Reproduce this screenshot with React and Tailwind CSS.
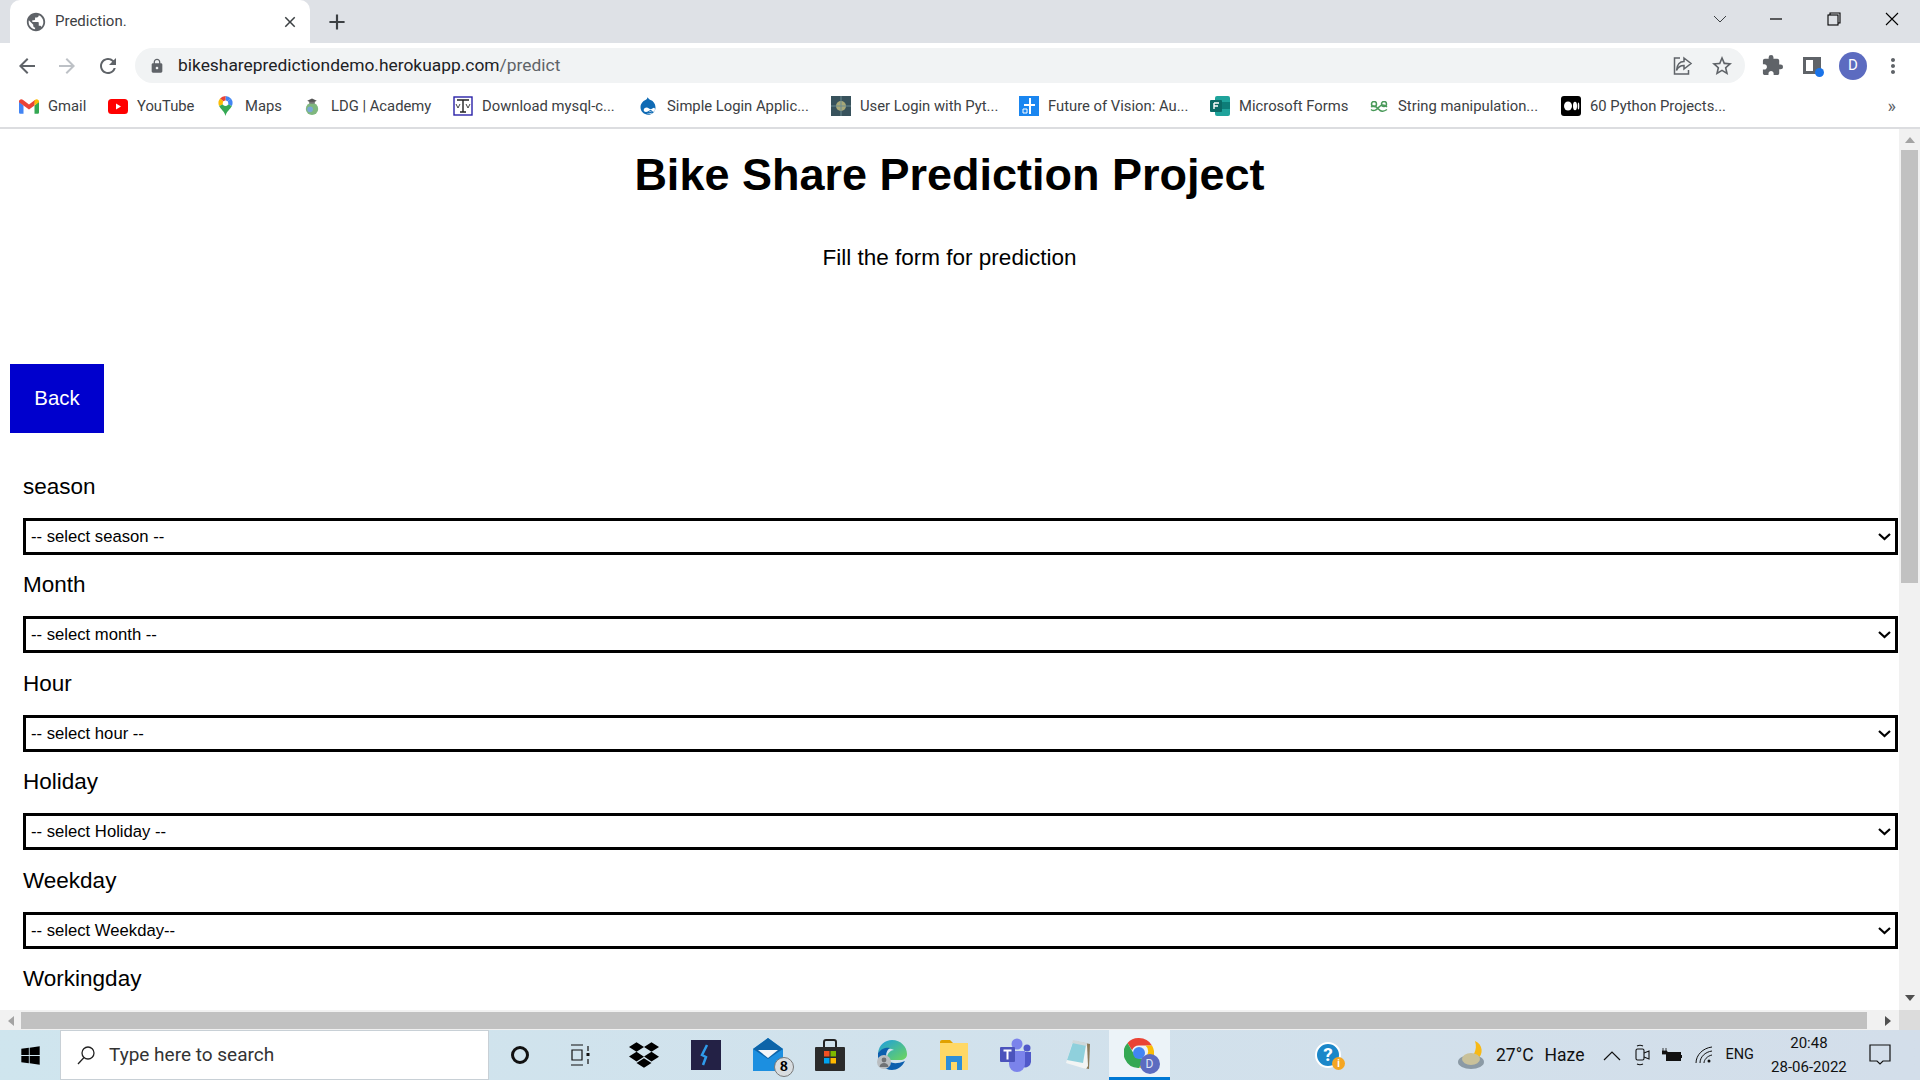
import { FaDropbox, FaWindows, FaDrupal } from "react-icons/fa";
import { MdPublic, MdArrowBack, MdArrowForward, MdRefresh, MdLock, MdExtension, MdStarBorder, MdMoreVert, MdClose, MdAdd } from "react-icons/md";

const Gmail = () => (
  <svg width="20" height="15" viewBox="0 0 20 15">
    <path d="M0 2.500V13.500a1.200 1.200 0 0 0 1.200 1.200H4.500V6.500z" fill="#4285f4" />
    <path d="M20 2.500V13.500a1.200 1.200 0 0 1-1.200 1.200H15.500V6.500z" fill="#34a853" />
    <path d="M0 2.500C0 .5 2.200-.5 3.800.7L10 5.400 16.200.7 15.500 6.500 10 10.600 4.500 6.500 0 3.200z" fill="#ea4335" />
    <path d="M15.500 1.200l.7-.5C17.800-.5 20 .5 20 2.500v.7l-4.500 3.300z" fill="#fbbc04" />
  </svg>
);

const YouTube = () => (
  <svg width="20" height="15" viewBox="0 0 20 15">
    <rect width="20" height="15" rx="3.500" fill="#f00" />
    <path d="M8 4.500l5 3-5 3z" fill="#fff" />
  </svg>
);

const Maps = () => (
  <svg width="15" height="20" viewBox="0 0 16 22">
    <path d="M8 0a8 8 0 0 1 6 2.800L8 8z" fill="#4285f4" />
    <path d="M14 2.800A8 8 0 0 1 15 11L8 8z" fill="#4285f4" />
    <path d="M2 2.800A8 8 0 0 1 8 0v8z" fill="#ea4335" />
    <path d="M1 11a8 8 0 0 1 1-8.200L8 8z" fill="#fbbc04" />
    <path d="M1 11l7-3 7 3c-2 4-6 6-7 11-1-5-5-7-7-11z" fill="#34a853" />
    <circle cx="8" cy="8" r="3" fill="#fff" />
  </svg>
);

const Ldg = () => (
  <svg width="16" height="19" viewBox="0 0 16 20">
    <circle cx="8" cy="12.500" r="6.500" fill="#7fb77e" />
    <circle cx="6" cy="13" r="3" fill="#7aa7d6" />
    <path d="M3 4l5-2.500L13 4 8 6.500z" fill="#555" />
    <path d="M5 5v2h6V5" fill="#777" />
  </svg>
);

const Mysql = () => (
  <svg width="20" height="20" viewBox="0 0 20 20" fill="none">
    <rect x="1" y="1" width="18" height="18" fill="#fff" stroke="#2a22a8" strokeWidth="1.400" />
    <path d="M4 4h12M10 4v12M7 16h6" stroke="#222" strokeWidth="1.400" />
    <path d="M3 8l2 4 2-4M13 8l2 4 2-4" stroke="#444" />
  </svg>
);

const UserLogin = () => (
  <svg width="20" height="20" viewBox="0 0 20 20">
    <rect width="20" height="20" fill="#38525c" />
    <circle cx="10" cy="10" r="5" fill="#a8a878" />
    <path d="M10 0v20M0 10h20" stroke="#6b8a90" />
  </svg>
);

const FutureVision = () => (
  <svg width="20" height="20" viewBox="0 0 20 20">
    <rect width="20" height="20" fill="#1a86f0" />
    <path d="M11 2v16M5 9h11" stroke="#fff" strokeWidth="2" />
    <path d="M4 13h4v4H4z" fill="none" stroke="#fff" />
  </svg>
);

const Forms = () => (
  <svg width="20" height="20" viewBox="0 0 20 20">
    <rect x="5" y="0" width="15" height="20" rx="2" fill="#1fa39b" />
    <rect x="12" y="6" width="8" height="7" fill="#0d7d78" />
    <rect x="0" y="4" width="12" height="12" rx="1" fill="#0b6a66" />
    <path d="M4 7h5M4 10h4M4 7v6" stroke="#fff" strokeWidth="1.400" fill="none" />
  </svg>
);

const StringIcon = () => (
  <svg width="18" height="11" viewBox="0 0 18 11" fill="none" stroke="#4a9a5a" strokeWidth="1.500">
    <circle cx="4" cy="3" r="2.500" />
    <circle cx="14" cy="3" r="2.500" />
    <path d="M1 8.500c3 2.500 6 0 8-2.500s5-3 8 0M1 6c3-2 6 0 8 2.500s5 2 8 0" />
  </svg>
);

const Medium = () => (
  <svg width="20" height="20" viewBox="0 0 20 20">
    <rect width="20" height="20" rx="3" fill="#000" />
    <ellipse cx="7" cy="10" rx="4" ry="4.500" fill="#fff" />
    <ellipse cx="14" cy="10" rx="2" ry="4.200" fill="#fff" />
    <ellipse cx="17.500" cy="10" rx="0.800" ry="3.600" fill="#fff" />
  </svg>
);

const bookmarks = [
  { icon: <Gmail />, label: "Gmail", width: "w-[39px]" },
  { icon: <YouTube />, label: "YouTube", width: "w-[58px]" },
  { icon: <Maps />, label: "Maps", width: "w-[36px]" },
  { icon: <Ldg />, label: "LDG | Academy", width: "w-[101px]" },
  { icon: <Mysql />, label: "Download mysql-c...", width: "w-[135px]" },
  { icon: <FaDrupal className="text-[20px] text-[#0f6ab4]" />, label: "Simple Login Applic...", width: "w-[143px]" },
  { icon: <UserLogin />, label: "User Login with Pyt...", width: "w-[138px]" },
  { icon: <FutureVision />, label: "Future of Vision: Au...", width: "w-[141px]" },
  { icon: <Forms />, label: "Microsoft Forms", width: "w-[109px]" },
  { icon: <StringIcon />, label: "String manipulation...", width: "w-[142px]" },
  { icon: <Medium />, label: "60 Python Projects...", width: "w-[135px]" },
];

const fields = [
  { label: "season", placeholder: "-- select season --" },
  { label: "Month", placeholder: "-- select month --" },
  { label: "Hour", placeholder: "-- select hour --" },
  { label: "Holiday", placeholder: "-- select Holiday --" },
  { label: "Weekday", placeholder: "-- select Weekday--" },
];

const Field = ({ label, placeholder }) => (
  <div className="mb-[16.4px]">
    <label className="block pt-px text-[22.5px] leading-[26px] mb-[18px] text-black">{label}</label>
    <div className="relative mr-px">
      <select
        defaultValue=""
        className="block w-full h-[37px] appearance-none border-[3px] border-black bg-white pl-[5px] text-[16.67px] text-black"
      >
        <option value="">{placeholder}</option>
      </select>
      <svg className="absolute right-[7px] top-[15px]" width="13" height="8" viewBox="0 0 13 8" fill="none" stroke="#000" strokeWidth="2.200">
        <path d="M1 1l5.500 5L12 1" />
      </svg>
    </div>
  </div>
);

const TabBar = () => (
  <div className="flex h-[43px] bg-[#dee1e6] pl-[10px]">
    <div className="flex w-[300px] items-center rounded-t-[10px] bg-white pl-[15px] pr-[11px]">
      <MdPublic className="text-[22px] text-[#5f6368]" />
      <span className="ml-[8px] flex-1 text-[15px] text-[#3c4043]">Prediction.</span>
      <MdClose className="text-[18px] text-[#3c4043]" />
    </div>
    <div className="ml-[14px] flex items-center">
      <MdAdd className="text-[26px] text-[#3c4043]" />
    </div>
    <div className="ml-auto flex items-center pb-[6px] pr-[10px]">
      <svg className="mr-[42px]" width="14" height="8" viewBox="0 0 14 8" fill="none" stroke="#3c4043">
        <path d="M1 1l6 6 6-6" />
      </svg>
      <svg className="mr-[44px]" width="14" height="14" viewBox="0 0 14 14" stroke="#000" strokeWidth="1.200">
        <path d="M1 7h12" />
      </svg>
      <svg className="mr-[44px]" width="14" height="14" viewBox="0 0 14 14" fill="none" stroke="#000" strokeWidth="1.100">
        <path d="M3 3V1h10v10h-2" />
        <rect x="1" y="3" width="10" height="10" />
      </svg>
      <svg className="mr-[11px]" width="14" height="14" viewBox="0 0 14 14" stroke="#000" strokeWidth="1.100">
        <path d="M1 1l12 12M13 1L1 13" />
      </svg>
    </div>
  </div>
);

const ToolBar = () => (
  <div className="flex h-[42px] items-center bg-white pt-[3px]">
    <MdArrowBack className="ml-[15px] text-[24px] text-[#5f6368]" />
    <MdArrowForward className="ml-[16px] text-[24px] text-[#bdc1c6]" />
    <MdRefresh className="ml-[17px] text-[24px] text-[#5f6368]" />
    <div className="ml-[15px] flex h-[35px] w-[1610px] items-center rounded-full bg-[#f1f3f4]">
      <MdLock className="ml-[14px] text-[16px] text-[#5f6368]" />
      <span className="ml-[13px] text-[17.4px] text-[#202124]">
        bikesharepredictiondemo.herokuapp.com<span className="text-[#5f6368]">/predict</span>
      </span>
      <div className="ml-auto flex items-center pr-[11px]">
        <svg width="20" height="20" viewBox="0 0 20 20" fill="none" stroke="#5f6368" strokeWidth="1.500">
          <path d="M7 2H1.500v16h14v-4" />
          <path d="M11 2l7 5.500-7 5.500V9.500c-4 0-6 1.500-7.500 5C4 9 6.500 5.500 11 5.500z" />
        </svg>
        <MdStarBorder className="ml-[17px] text-[24px] text-[#5f6368]" />
      </div>
    </div>
    <MdExtension className="ml-[16px] text-[23px] text-[#5f6368]" />
    <div className="relative ml-[19px] h-[17px] w-[18px] border-[3px] border-r-[8px] border-[#5f6368]">
      <span className="absolute -bottom-[6px] -right-[11px] h-[9px] w-[9px] rounded-full bg-[#1a73e8]" />
    </div>
    <div className="ml-[18px] flex h-[28px] w-[28px] items-center justify-center rounded-full bg-[#5c6bc0] text-[15px] text-white">D</div>
    <MdMoreVert className="ml-[14px] text-[24px] text-[#5f6368]" />
  </div>
);

const BookmarkBar = () => (
  <div className="flex h-[44px] items-center gap-[20px] border-b-2 border-[#dcdde0] bg-white pl-[18px]">
    {bookmarks.map((b) => (
      <div key={b.label} className="flex items-center">
        <div className="flex w-[21px] items-center justify-center">{b.icon}</div>
        <span className={`ml-[9px] whitespace-nowrap text-[14.8px] text-[#3c4043] ${b.width}`}>{b.label}</span>
      </div>
    ))}
    <span className="ml-auto mr-[24px] text-[18px] leading-none text-[#5f6368]">»</span>
  </div>
);

const Slot = ({ children }) => (
  <div className="flex h-full w-[62px] items-center justify-center">{children}</div>
);

const Taskbar = () => (
  <div className="flex h-[50px] items-center bg-gradient-to-r from-[#cfe5ee] to-[#d3deea] text-[#111]">
    <div className="flex h-full w-[60px] items-center justify-center">
      <FaWindows className="text-[21px] text-black" />
    </div>
    <div className="flex h-full w-[429px] items-center border border-[#c8d0d6] bg-white pl-[15px]">
      <svg width="20" height="20" viewBox="0 0 20 20" fill="none" stroke="#222" strokeWidth="1.300">
        <circle cx="12" cy="8" r="6" />
        <path d="M8 12.500L2 19" />
      </svg>
      <span className="ml-[13px] text-[19px] text-[#333]">Type here to search</span>
    </div>
    <Slot>
      <div className="h-[18px] w-[18px] rounded-full border-[3px] border-[#111]" />
    </Slot>
    <Slot>
      <svg className="mr-[4px]" width="22" height="24" viewBox="0 0 22 24" fill="none" stroke="#111" strokeWidth="1.200">
        <path d="M2 2h12M2 22h12M3 7h10v10H3zM19 3v5M19 16v5" />
        <rect x="17.500" y="10" width="3" height="3" fill="#111" stroke="none" />
      </svg>
    </Slot>
    <Slot>
      <FaDropbox className="text-[30px] text-black" />
    </Slot>
    <Slot>
      <div className="flex h-[30px] w-[30px] items-center justify-center bg-[#232145]">
        <svg width="14" height="24" viewBox="0 0 14 24">
          <path d="M8 2L3 12l4 2-3 8" fill="none" stroke="#2f9bea" strokeWidth="2.500" />
        </svg>
      </div>
    </Slot>
    <Slot>
      <div className="relative h-[36px] w-[30px]">
        <svg width="30" height="36" viewBox="0 0 30 36">
          <path d="M15 1L30 12v22H0V12z" fill="#1c8fe0" />
          <path d="M15 1L30 12 15 22 0 12z" fill="#0d64a8" />
          <path d="M5 13h20l-10 8z" fill="#f4f6f8" />
        </svg>
        <span className="absolute -right-[11px] bottom-[-4px] flex h-[20px] w-[20px] items-center justify-center rounded-full border border-[#777] bg-[#d9dde0] font-serif text-[14px] font-bold leading-none text-black">8</span>
      </div>
    </Slot>
    <Slot>
      <svg width="30" height="32" viewBox="0 0 30 32">
        <path d="M9 8V3a2 2 0 0 1 2-2h8a2 2 0 0 1 2 2v5" fill="none" stroke="#222" strokeWidth="2" />
        <rect y="8" width="30" height="24" rx="1" fill="#2b2b2b" />
        <rect x="9" y="12" width="5.500" height="5.500" fill="#f25022" />
        <rect x="15.500" y="12" width="5.500" height="5.500" fill="#7fba00" />
        <rect x="9" y="19" width="5.500" height="5.500" fill="#00a4ef" />
        <rect x="15.500" y="19" width="5.500" height="5.500" fill="#ffb900" />
      </svg>
    </Slot>
    <Slot>
      <svg width="32" height="32" viewBox="0 0 32 32">
        <defs>
          <linearGradient id="edgeTop" x1="0" y1="0" x2="1" y2="1">
            <stop offset="0" stopColor="#1b9de2" />
            <stop offset="1" stopColor="#6fd659" />
          </linearGradient>
        </defs>
        <path d="M2 14C3 6 9 1 16 1c9 0 15 7 15 14 0 4-3 6-7 6H14c-2 0-3-1-3-2 0-5 4-8 7-8-3-2-13-2-16 3z" fill="url(#edgeTop)" />
        <path d="M2 14c3-5 9-6 12-5-3 2-5 6-3 11 2 4 8 6 18 2-3 6-8 9-13 9C8 31 1 24 2 14z" fill="#0c5fae" />
        <circle cx="8" cy="23" r="7" fill="#b9bdc0" />
        <circle cx="8" cy="21" r="2.400" fill="#6f7275" />
        <path d="M3.500 28c.5-3 2-4 4.500-4s4 1 4.500 4z" fill="#6f7275" />
      </svg>
    </Slot>
    <Slot>
      <svg width="28" height="30" viewBox="0 0 28 30">
        <path d="M0 2a2 2 0 0 1 2-2h8l3 3h-13z" fill="#e0a100" />
        <rect y="3" width="28" height="27" fill="#ffd866" />
        <path d="M6 30V16h16v14h-5v-8h-6v8z" fill="#2e8fd8" />
      </svg>
    </Slot>
    <Slot>
      <svg width="32" height="34" viewBox="0 0 32 34">
        <circle cx="17" cy="6" r="5.500" fill="#7b83eb" />
        <circle cx="27" cy="10" r="3.500" fill="#5059c9" />
        <path d="M23 14h8v10a6 6 0 0 1-8 5z" fill="#5059c9" />
        <path d="M9 13h16v13a8 8 0 0 1-16 0z" fill="#7b83eb" />
        <rect y="9" width="15" height="15" rx="1" fill="#4b53bc" />
        <path d="M3.500 12.500h8M7.500 12.500v9" stroke="#fff" strokeWidth="2" />
      </svg>
    </Slot>
    <Slot>
      <svg width="28" height="32" viewBox="0 0 28 32">
        <path d="M10 2l16 3-1 25-5-1z" fill="#8a7a5a" />
        <path d="M9 2l14 3 1 22-2 3L2 24z" fill="#f2f4f4" />
        <path d="M9 3l13 3-3 18L3 21z" fill="#8fd0dc" />
        <path d="M9 1l14 3-.5 3L8 4z" fill="#cfd8da" />
      </svg>
    </Slot>
    <div className="flex h-full w-[61px] items-center justify-center border-b-[3px] border-[#0078d4] bg-[#ecf3f8]">
      <div className="relative h-[32px] w-[32px]">
        <svg width="30" height="30" viewBox="0 0 30 30">
          <path d="M15 0a15 15 0 0 1 13 7.500H15a7.500 7.500 0 0 0-7 4.700L3.500 5A15 15 0 0 1 15 0z" fill="#ea4335" />
          <path d="M28 7.500A15 15 0 0 1 15 30l6.500-11a7.500 7.500 0 0 0 0-11.500z" fill="#fbbc04" />
          <path d="M3.500 5l7 12a7.500 7.500 0 0 0 11 2L15 30A15 15 0 0 1 3.500 5z" fill="#34a853" />
          <circle cx="15" cy="15" r="6" fill="#4285f4" />
        </svg>
        <span className="absolute -bottom-[4px] -right-[4px] flex h-[20px] w-[20px] items-center justify-center rounded-full bg-[#5c6bc0] text-[12px] text-[#dfe3f5]">D</span>
      </div>
    </div>
    <div className="relative ml-[145px] h-[26px] w-[28px]">
      <div className="flex h-[26px] w-[26px] items-center justify-center rounded-full border-[2px] border-white bg-[#1b87c9] text-[19px] font-bold text-white">?</div>
      <span className="absolute -bottom-[2px] -right-[2px] flex h-[13px] w-[13px] items-center justify-center rounded-full bg-[#f5a623] text-[10px] font-bold leading-none text-white">i</span>
    </div>
    <svg className="ml-[114px]" width="28" height="30" viewBox="0 0 28 30">
      <path d="M18 1c8 3 9 14 2 18-4 2-8 1-10-1 6 0 11-8 8-17z" fill="#f7b916" />
      <ellipse cx="14" cy="22" rx="13" ry="7" fill="#8b9aa5" />
      <ellipse cx="14" cy="19" rx="9" ry="6" fill="#c9c19a" />
    </svg>
    <span className="ml-[11px] text-[17.5px] text-[#111]">27°C</span>
    <span className="ml-[11px] text-[17.5px] text-[#111]">Haze</span>
    <svg className="ml-[19px]" width="18" height="11" viewBox="0 0 18 11" fill="none" stroke="#111" strokeWidth="1.200">
      <path d="M1 10l8-8 8 8" />
    </svg>
    <svg className="ml-[14px]" width="15" height="22" viewBox="0 0 15 22" fill="none" stroke="#111" strokeWidth="1.100">
      <rect x="1" y="5" width="8" height="11" rx="1.500" />
      <path d="M9 9l5-2v8l-5-2M2 2c2-1 4-1 6 0M2 20c2 1 4 1 6 0" />
    </svg>
    <svg className="ml-[12px]" width="20" height="14" viewBox="0 0 20 14">
      <rect x="4.500" y="4.500" width="14" height="8" fill="#111" stroke="#111" />
      <rect x="19" y="7" width="1" height="3" fill="#111" />
      <path d="M1 0v3M4 0v3M0 3h5v3H0z" fill="#111" stroke="#111" strokeWidth="0.800" />
    </svg>
    <svg className="ml-[13px]" width="18" height="18" viewBox="0 0 18 18" fill="none" stroke="#111" strokeWidth="1">
      <path d="M1 17C1 9 8 2 17 1M5 17c0-6 5-11 12-12M9 17c0-3 3-7 8-8" />
      <circle cx="14" cy="15" r="1.500" fill="#111" stroke="none" />
    </svg>
    <span className="ml-[12px] text-[14.5px] text-[#111]">ENG</span>
    <div className="ml-[16px] flex w-[78px] flex-col items-center text-[15px] leading-[24px] text-[#111]">
      <span>20:48</span>
      <span>28-06-2022</span>
    </div>
    <svg className="ml-[21px]" width="22" height="24" viewBox="0 0 22 24" fill="none" stroke="#111" strokeWidth="1.200">
      <path d="M1 2h20v16h-7l-3 3-3-3H1z" />
    </svg>
  </div>
);

const VerticalScrollbar = () => (
  <div className="flex w-[21px] flex-col items-center justify-between bg-[#f1f1f1] pb-[9px] pt-[8px]">
    <div className="flex flex-col items-center">
      <svg width="10" height="6" viewBox="0 0 10 6">
        <path d="M5 0l5 6H0z" fill="#a3a3a3" />
      </svg>
      <div className="mt-[7px] h-[433px] w-[17px] bg-[#c1c1c1]" />
    </div>
    <svg width="10" height="6" viewBox="0 0 10 6">
      <path d="M5 6L0 0h10z" fill="#505050" />
    </svg>
  </div>
);

const HorizontalScrollbar = () => (
  <div className="flex h-[20px]">
    <div className="flex flex-1 items-center bg-[#f1f1f1] pt-px">
      <svg className="ml-[8px]" width="6" height="10" viewBox="0 0 6 10">
        <path d="M0 5l6-5v10z" fill="#a3a3a3" />
      </svg>
      <div className="ml-[7px] h-[17px] w-[1846px] bg-[#c1c1c1]" />
      <svg className="ml-[18px]" width="6" height="10" viewBox="0 0 6 10">
        <path d="M6 5L0 0v10z" fill="#505050" />
      </svg>
    </div>
    <div className="w-[21px] bg-[#dcdcdc]" />
  </div>
);

export default function App() {
  return (
    <div className="flex h-screen w-screen flex-col overflow-hidden bg-white font-['Roboto',sans-serif]">
      <TabBar />
      <ToolBar />
      <BookmarkBar />
      <div className="flex min-h-0 flex-1 flex-col">
        <div className="flex min-h-0 flex-1">
          <main className="min-h-0 min-w-0 flex-1 overflow-hidden font-['Liberation_Sans',sans-serif]">
            <h1 className="mt-[20px] text-center text-[45px] font-bold leading-[52px] text-black">Bike Share Prediction Project</h1>
            <p className="mt-[43px] text-center text-[22.5px] leading-[28px] text-black">Fill the form for prediction</p>
            <button className="ml-[10px] mt-[92px] block h-[69px] w-[94px] bg-[#0000cd] text-[20.4px] text-white">Back</button>
            <div className="mt-[40px] pl-[23px]">
              {fields.map((f) => (
                <Field key={f.label} label={f.label} placeholder={f.placeholder} />
              ))}
              <label className="block pt-px text-[22.5px] leading-[26px] text-black">Workingday</label>
            </div>
          </main>
          <VerticalScrollbar />
        </div>
        <HorizontalScrollbar />
      </div>
      <Taskbar />
    </div>
  );
}
